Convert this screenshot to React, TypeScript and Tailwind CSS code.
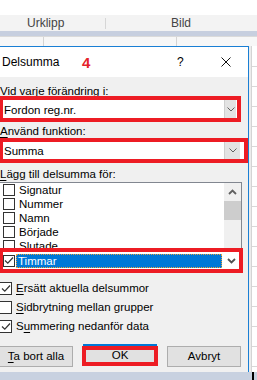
import React from "react";

function Box({ checked, big }: { checked?: boolean; big?: boolean }) {
  return (
    <div
      className={
        big
          ? "ml-[-1px] w-[13px] h-[13px] border border-[#333] bg-white shrink-0 flex items-center justify-center"
          : "w-[12px] h-[12px] border border-[#333] bg-white shrink-0 flex items-center justify-center"
      }
    >
      {checked && (
        <svg width="10" height="9" viewBox="0 0 10 9">
          <path d="M1 4.5 L3.8 7.2 L9 1.5" fill="none" stroke="#333" strokeWidth="1.2" />
        </svg>
      )}
    </div>
  );
}

function Chevron() {
  return (
    <svg width="8" height="5" viewBox="0 0 8 5">
      <path d="M0.5 0.5 L4 4 L7.5 0.5" fill="none" stroke="#606060" strokeWidth="1" />
    </svg>
  );
}

function U({ c }: { c: string }) {
  return <span className="underline underline-offset-[2px]">{c}</span>;
}

const items = ["Signatur", "Nummer", "Namn", "Började", "Slutade"];
const rows = [21, 20, 20, 20, 20, 20, 20, 20, 20, 20, 20, 20, 20, 20, 20, 20];

function Dialog() {
  return (
    <div className="w-[249px] shrink-0 border-t border-r border-[#1a7fd4] bg-[#f0f0f0] flex flex-col">
      {/* title bar */}
      <div className="h-[30px] bg-white flex items-center text-[12px]">
        <span className="w-[82px] pl-[2px]">Delsumma</span>
        <span className="w-[95px] text-[15px] font-bold text-[#e5232b] leading-none">4</span>
        <span className="w-[44px]">?</span>
        <svg width="10" height="10" viewBox="0 0 10 10">
          <path d="M0.5 0.5 L9.5 9.5 M9.5 0.5 L0.5 9.5" stroke="#111" strokeWidth="1" />
        </svg>
      </div>

      <div className="flex flex-col pt-[7px]">
        <div className="h-[12px] leading-[14px]">
          <U c="V" />id varje förändring i:
        </div>
        <div className="w-[241px] h-[26px] border-4 border-l-[3px] border-[#ed1c24] bg-white flex items-center">
          <span className="flex-1 pl-[1px] leading-[14px] pt-[2px]">Fordon reg.nr.</span>
          <div className="w-[12px] h-full mr-[1px] bg-[#e3e3e3] border-l border-[#cfcfcf] flex items-center justify-center">
            <Chevron />
          </div>
        </div>

        <div className="mt-[2px] h-[12px] leading-[14px]">
          <U c="A" />nvänd funktion:
        </div>
        <div className="mt-[2px] w-[248px] h-[25px] border-4 border-l-[3px] border-[#ed1c24] bg-white flex items-center">
          <span className="flex-1 pl-[1px] leading-[14px] pt-[1px]">Summa</span>
          <div className="w-[16px] h-full mr-[4px] bg-[#e3e3e3] border-l border-[#cfcfcf] flex items-center justify-center">
            <Chevron />
          </div>
        </div>

        <div className="mt-[4px] h-[12px] leading-[14px]">
          <U c="L" />ägg till delsumma för:
        </div>
        <div className="mt-[3px] w-[242px] h-[66px] border-t border-r border-[#828790] bg-white flex overflow-hidden">
          <div className="flex-1 flex flex-col">
            {items.map((t) => (
              <div key={t} className="h-[14px] shrink-0 flex items-center pl-[3px]">
                <Box />
                <span className="ml-[4px] leading-[14px]">{t}</span>
              </div>
            ))}
          </div>
          <div className="w-[17px] bg-[#f0f0f0] flex flex-col">
            <div className="h-[17px] flex items-center justify-center">
              <svg width="9" height="6" viewBox="0 0 9 6">
                <path d="M1 5 L4.5 1.5 L8 5" fill="none" stroke="#606060" strokeWidth="1.8" />
              </svg>
            </div>
            <div className="h-[19px] mt-[1px] bg-[#cdcdcd]" />
          </div>
        </div>

        <div className="w-[243px] h-[25px] border-4 border-l-[3px] border-[#ed1c24] bg-white flex items-center">
          <Box checked />
          <div className="ml-[1px] w-[206px] h-[14px] bg-[#0078d7] outline outline-1 outline-dotted outline-[#e9a23b] -outline-offset-1 flex items-center">
            <span className="ml-[2px] text-white leading-[14px]">Timmar</span>
          </div>
          <div className="ml-[2px] w-[15px] h-full bg-white flex items-center justify-center">
            <svg width="9" height="6" viewBox="0 0 9 6">
              <path d="M1 1 L4.5 4.5 L8 1" fill="none" stroke="#505050" strokeWidth="1.8" />
            </svg>
          </div>
        </div>

        <div className="mt-[6px] flex flex-col">
          <div className="h-[19px] flex items-center">
            <Box checked big />
            <span className="ml-[4px]"><U c="E" />rsätt aktuella delsummor</span>
          </div>
          <div className="h-[19px] flex items-center">
            <Box big />
            <span className="ml-[4px]"><U c="S" />idbrytning mellan grupper</span>
          </div>
          <div className="h-[19px] flex items-center">
            <Box checked big />
            <span className="ml-[4px]">S<U c="u" />mmering nedanför data</span>
          </div>
        </div>

        <div className="mt-[8px] flex items-start">
          <div className="mt-[2px] w-[73px] h-[21px] bg-[#e1e1e1] border border-l-0 border-[#adadad] flex items-center justify-center">
            <span><U c="T" />a bort alla</span>
          </div>
          <div className="ml-[9px] w-[76px] flex flex-col">
            <div className="h-[2px] mx-[1px] bg-[#0078d7]" />
            <div className="h-[20px] border-4 border-[#ed1c24] bg-[#e1e1e1] flex items-center justify-center">
              OK
            </div>
          </div>
          <div className="ml-[9px] mt-[2px] w-[74px] h-[21px] bg-[#e1e1e1] border border-[#adadad] flex items-center justify-center">
            Avbryt
          </div>
        </div>
      </div>
    </div>
  );
}

function RightStrip() {
  return (
    <div className="flex-1 bg-white flex overflow-hidden">
      <div className="w-[2px] bg-[#ececec]" />
      <div className="flex-1 flex flex-col border-l border-[#d4d4d4]">
        {rows.map((h, i) => (
          <div key={i} className="shrink-0 border-b border-[#d8d8d8]" style={{ height: h }} />
        ))}
      </div>
    </div>
  );
}

export default function App() {
  return (
    <div className="w-[257px] h-[380px] overflow-hidden bg-white flex flex-col font-['Liberation_Sans',Arial,sans-serif] text-[11.5px] text-black">
      <div className="h-[15px] shrink-0 bg-white" />
      <div className="h-[16px] shrink-0 bg-[#f3f3f3] flex items-center text-[#444] text-[12px]">
        <span className="ml-[27px] w-[78px]">Urklipp</span>
        <div className="w-px h-[11px] bg-[#d6d6d6]" />
        <span className="ml-[65px]">Bild</span>
      </div>
      <div className="h-[5px] shrink-0 bg-[#c7cfdf]" />
      <div className="h-[10px] shrink-0 bg-[#f7f7f7] border-t border-[#dadada] flex">
        <div className="w-[44px] border-r border-[#d4d4d4]" />
        <div className="w-[133px] border-r border-[#d4d4d4]" />
      </div>
      <div className="flex flex-1 min-h-0">
        <Dialog />
        <RightStrip />
      </div>
      <div className="h-[8px] shrink-0 bg-[#c8d1e0] flex">
        <div className="ml-[252px] w-[2px] bg-black" />
      </div>
    </div>
  );
}
